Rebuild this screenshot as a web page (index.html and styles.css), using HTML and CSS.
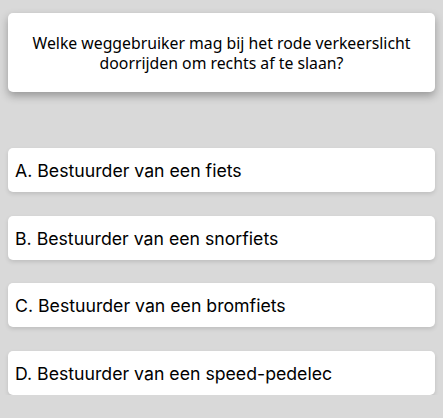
FILE: index.html
```html
<!DOCTYPE html>
<html lang="nl">
<head>
<meta charset="utf-8">
<link rel="stylesheet" href="styles.css">
</head>
<body>
<main class="quiz">
  <section class="question">
    <p>Welke weggebruiker mag bij het rode verkeerslicht doorrijden om rechts af te slaan?</p>
  </section>
  <ul class="options">
    <li class="option">A. Bestuurder van een fiets</li>
    <li class="option">B. Bestuurder van een snorfiets</li>
    <li class="option">C. Bestuurder van een bromfiets</li>
    <li class="option">D. Bestuurder van een speed-pedelec</li>
  </ul>
</main>
</body>
</html>
```
FILE: styles.css
```css
html, body {
  margin: 0;
  padding: 0;
  background: #d9d9d9;
}
.quiz {
  padding: 13px 8px 0 8px;
  display: flex;
  flex-direction: column;
}
.question {
  background: #fff;
  border-radius: 5px;
  box-shadow: 0 4px 8px rgba(0, 0, 0, 0.3);
  padding: 20px 20px 19px;
  text-align: center;
}
.question p {
  margin: 0;
  font-family: "Noto Sans", sans-serif;
  font-size: 15.8px;
  line-height: 20px;
  color: #000;
}
.options {
  list-style: none;
  margin: 56px 0 0 0;
  padding: 0;
  display: flex;
  flex-direction: column;
  gap: 23.7px;
}
.option {
  box-sizing: border-box;
  background: #fff;
  border-radius: 5px;
  box-shadow: 0 2px 4px rgba(0, 0, 0, 0.12);
  height: 44px;
  display: flex;
  align-items: center;
  padding: 1px 7px 0;
  font-family: "Inter", sans-serif;
  font-size: 17.7px;
  color: #000;
}
```
